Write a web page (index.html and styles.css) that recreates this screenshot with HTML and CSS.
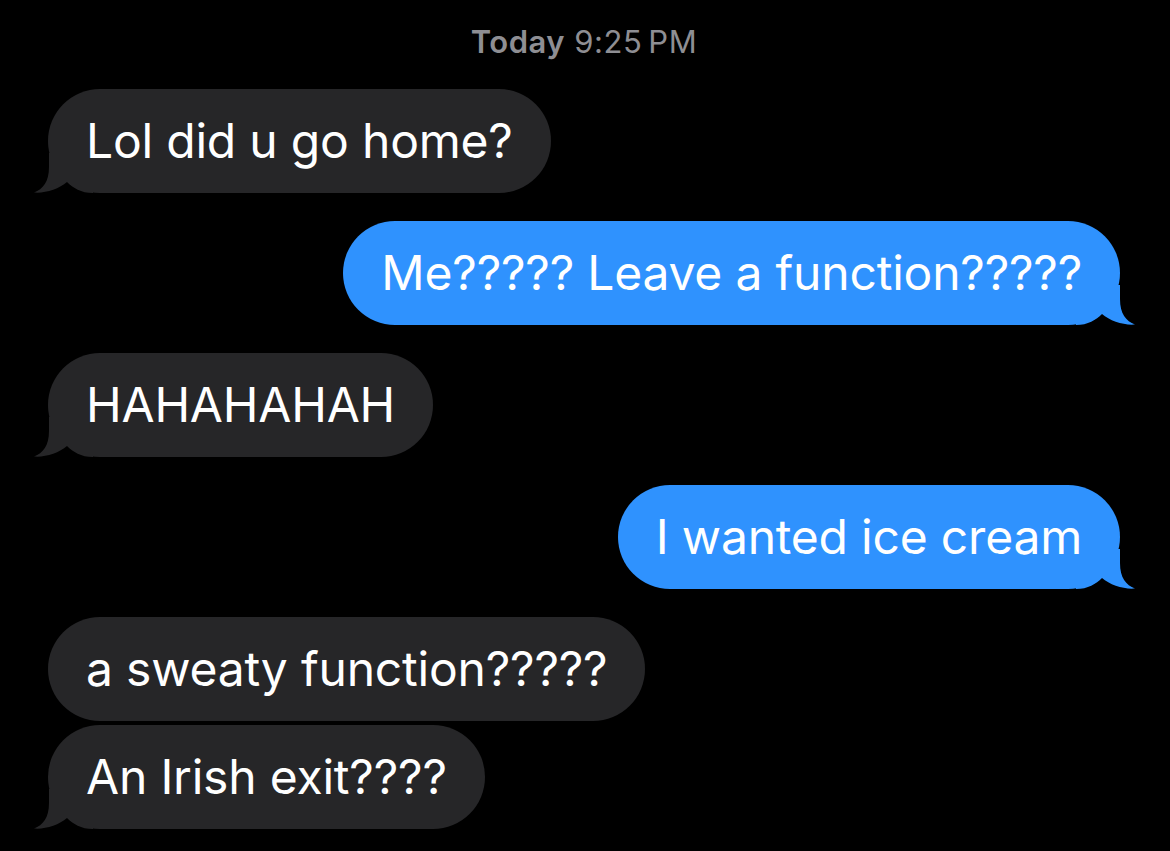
FILE: index.html
```html
<!DOCTYPE html>
<html lang="en">
<head>
<meta charset="utf-8">
<title>Messages</title>
<link rel="stylesheet" href="styles.css">
</head>
<body>
<main class="thread">
  <div class="stamp"><span class="stamp-day">Today</span> 9:25&#8201;PM</div>

  <div class="row in">
    <div class="bubble">Lol did u go home?<svg class="tail" viewBox="0 0 60 40" aria-hidden="true"><path d="M16 0 L16 14 C16 29 10 36 1 39.5 C12 40.5 26 36 34 29 C40 35 48 40 60 40 L60 0 Z"/></svg></div>
  </div>

  <div class="row out">
    <div class="bubble">Me????? Leave a function?????<svg class="tail" viewBox="0 0 60 40" aria-hidden="true"><path d="M16 0 L16 14 C16 29 10 36 1 39.5 C12 40.5 26 36 34 29 C40 35 48 40 60 40 L60 0 Z"/></svg></div>
  </div>

  <div class="row in">
    <div class="bubble">HAHAHAHAH<svg class="tail" viewBox="0 0 60 40" aria-hidden="true"><path d="M16 0 L16 14 C16 29 10 36 1 39.5 C12 40.5 26 36 34 29 C40 35 48 40 60 40 L60 0 Z"/></svg></div>
  </div>

  <div class="row out">
    <div class="bubble">I wanted ice cream<svg class="tail" viewBox="0 0 60 40" aria-hidden="true"><path d="M16 0 L16 14 C16 29 10 36 1 39.5 C12 40.5 26 36 34 29 C40 35 48 40 60 40 L60 0 Z"/></svg></div>
  </div>

  <div class="row in group">
    <div class="bubble">a sweaty function?????</div>
  </div>
  <div class="row in cont">
    <div class="bubble">An Irish exit????<svg class="tail" viewBox="0 0 60 40" aria-hidden="true"><path d="M16 0 L16 14 C16 29 10 36 1 39.5 C12 40.5 26 36 34 29 C40 35 48 40 60 40 L60 0 Z"/></svg></div>
  </div>
</main>
</body>
</html>
```

FILE: styles.css
```css
html, body {
  margin: 0;
  padding: 0;
  background: #000;
}

body {
  width: 1170px;
  height: 851px;
  overflow: hidden;
  font-family: "Inter", "Liberation Sans", sans-serif;
  color: #fff;
}

.thread {
  display: flex;
  flex-direction: column;
  padding: 0 50px 0 48px;
}

.stamp {
  text-align: center;
  color: #8e8e93;
  font-size: 31px;
  line-height: 36px;
  padding-top: 24px;
  margin-bottom: 29px;
  letter-spacing: 0.5px;
}

.stamp-day {
  font-weight: 600;
}

.row {
  display: flex;
  margin-top: 28px;
}

.row:nth-child(2) {
  margin-top: 0;
}

.row.cont {
  margin-top: 4px;
}

.row.in {
  justify-content: flex-start;
}

.row.out {
  justify-content: flex-end;
}

.bubble {
  position: relative;
  isolation: isolate;
  font-size: 48px;
  line-height: 58px;
  padding: 23px 38px;
  border-radius: 52px;
  letter-spacing: -0.2px;
  white-space: nowrap;
}

.in .bubble {
  background: #262628;
}

.out .bubble {
  background: #2f92fe;
}

.tail {
  position: absolute;
  z-index: -1;
  bottom: 0;
  width: 60px;
  height: 40px;
}

.in .tail {
  left: -15px;
  fill: #262628;
}

.out .tail {
  right: -16px;
  fill: #2f92fe;
  transform: scaleX(-1);
}
```
